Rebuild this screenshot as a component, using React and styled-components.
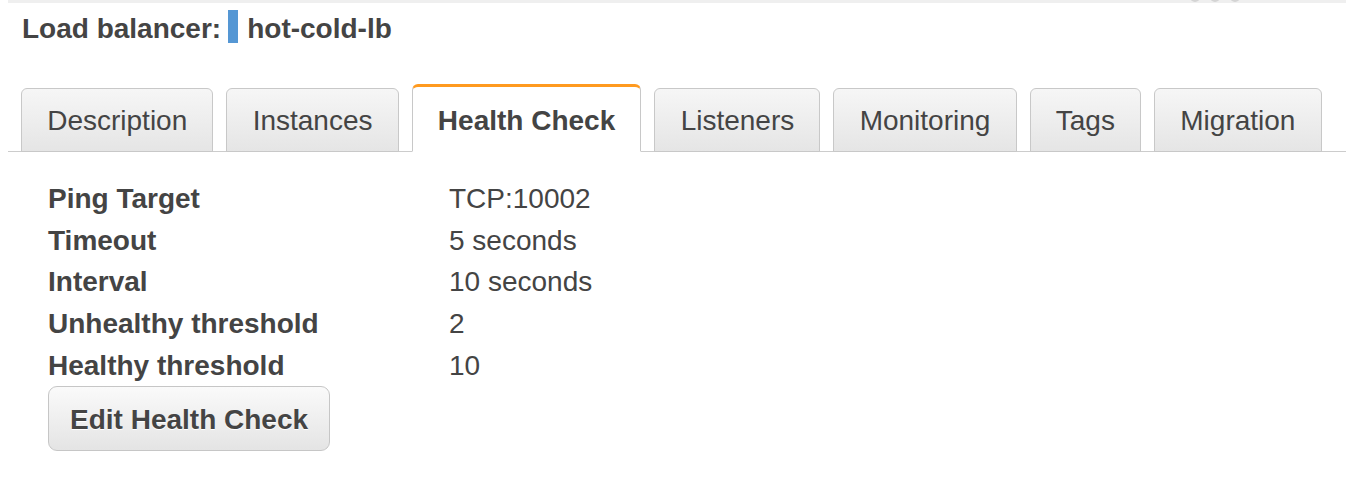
import React from "react";
import styled, { createGlobalStyle } from "styled-components";

const Global = createGlobalStyle`
  html, body { margin: 0; padding: 0; background: #fff; }
  body { font-family: "Liberation Sans", Arial, Helvetica, sans-serif; color: #444; }
`;

const Page = styled.div`
  width: 1346px;
  min-height: 484px;
  overflow: hidden;
`;

const TopRule = styled.div`
  margin-left: 8px;
  height: 3px;
  background: #efefef;
  display: flex;
  justify-content: flex-end;
  gap: 10px;
  padding-right: 106px;
`;

const Dot = styled.span`
  width: 10px;
  height: 10px;
  margin-top: -8px;
  border-radius: 50%;
  background: #d4d4d4;
`;

const TitleRow = styled.h1`
  margin: 7px 0 0 22px;
  height: 33px;
  display: flex;
  align-items: flex-start;
  font-size: 28px;
  line-height: 37px;
  font-weight: bold;
  color: #444;
`;

const ColorBar = styled.span`
  display: inline-block;
  width: 10px;
  height: 33px;
  margin: 0 9px 0 7px;
  background: #5597d4;
`;

const TabStrip = styled.div`
  margin: 41px 0 0 8px;
  padding-left: 13px;
  display: flex;
  align-items: flex-end;
  gap: 13px;
  border-bottom: 1px solid #cccccc;
`;

const Tab = styled.div`
  box-sizing: border-box;
  margin-bottom: -1px;
  padding: ${(p) => (p.$active ? "18px 25.2px 14px" : "16px 25.2px 14px")};
  height: ${(p) => (p.$active ? "68px" : "64px")};
  font-size: 28px;
  line-height: 32px;
  white-space: nowrap;
  color: #444;
  font-weight: ${(p) => (p.$active ? "bold" : "normal")};
  border: 1px solid #c8c8c8;
  border-top: ${(p) => (p.$active ? "3px solid #ff9a1f" : "1px solid #c8c8c8")};
  border-bottom-color: ${(p) => (p.$active ? "#ffffff" : "#c8c8c8")};
  border-radius: 6px 6px 0 0;
  background: ${(p) =>
    p.$active ? "#ffffff" : "linear-gradient(#f6f6f6, #e5e5e5)"};
`;

const Content = styled.div`
  padding: 26px 0 0 48px;
`;

const DetailGrid = styled.div`
  display: grid;
  grid-template-columns: 401px auto;
  font-size: 28px;
  line-height: 41.7px;
  margin-bottom: -1px;
`;

const Label = styled.div`
  font-weight: bold;
  color: #444;
`;

const Value = styled.div`
  color: #444;
`;

const Button = styled.button`
  box-sizing: border-box;
  height: 65px;
  padding: 17px 21px 14px;
  font-family: inherit;
  font-size: 28px;
  line-height: 32px;
  font-weight: bold;
  color: #444;
  text-shadow: 0 1px 0 #ffffff;
  border: 1px solid #c6c6c6;
  border-radius: 9px;
  background: linear-gradient(#fafafa, #e4e4e4);
  cursor: pointer;
`;

const tabs = [
  "Description",
  "Instances",
  "Health Check",
  "Listeners",
  "Monitoring",
  "Tags",
  "Migration",
];

const rows = [
  ["Ping Target", "TCP:10002"],
  ["Timeout", "5 seconds"],
  ["Interval", "10 seconds"],
  ["Unhealthy threshold", "2"],
  ["Healthy threshold", "10"],
];

export default function App() {
  return (
    <Page>
      <Global />
      <TopRule>
        <Dot />
        <Dot />
        <Dot />
      </TopRule>
      <TitleRow>
        Load balancer:
        <ColorBar />
        hot-cold-lb
      </TitleRow>
      <TabStrip>
        {tabs.map((t) => (
          <Tab key={t} $active={t === "Health Check"}>
            {t}
          </Tab>
        ))}
      </TabStrip>
      <Content>
        <DetailGrid>
          {rows.map(([l, v]) => (
            <React.Fragment key={l}>
              <Label>{l}</Label>
              <Value>{v}</Value>
            </React.Fragment>
          ))}
        </DetailGrid>
        <Button>Edit Health Check</Button>
      </Content>
    </Page>
  );
}
